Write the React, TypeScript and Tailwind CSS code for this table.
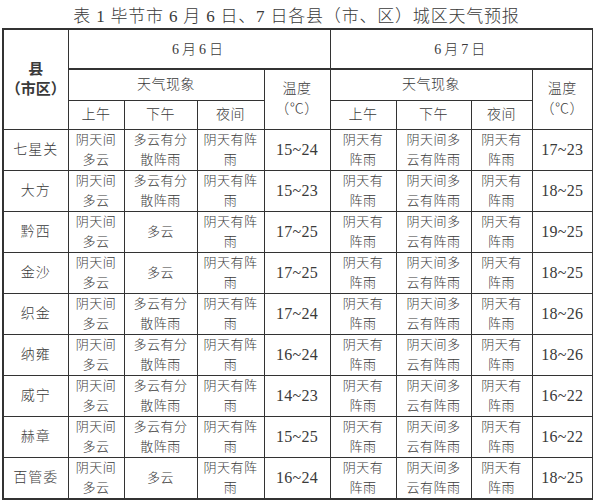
import React from "react";

type Row = {
  name: string;
  a: string[];
  t1: string;
  b: string[];
  t2: string;
};

const A1 = "阴天间\n多云";
const A2a = "多云有分\n散阵雨";
const A2b = "多云";
const A3 = "阴天有阵\n雨";
const B1 = "阴天有\n阵雨";
const B2 = "阴天间多\n云有阵雨";
const B3 = "阴天有\n阵雨";

const rows: Row[] = [
  { name: "七星关", a: [A1, A2a, A3], t1: "15~24", b: [B1, B2, B3], t2: "17~23" },
  { name: "大方", a: [A1, A2a, A3], t1: "15~23", b: [B1, B2, B3], t2: "18~25" },
  { name: "黔西", a: [A1, A2b, A3], t1: "17~25", b: [B1, B2, B3], t2: "19~25" },
  { name: "金沙", a: [A1, A2b, A3], t1: "17~25", b: [B1, B2, B3], t2: "18~25" },
  { name: "织金", a: [A1, A2a, A3], t1: "17~24", b: [B1, B2, B3], t2: "18~26" },
  { name: "纳雍", a: [A1, A2a, A3], t1: "16~24", b: [B1, B2, B3], t2: "18~26" },
  { name: "威宁", a: [A1, A2a, A3], t1: "14~23", b: [B1, B2, B3], t2: "16~22" },
  { name: "赫章", a: [A1, A2a, A3], t1: "15~25", b: [B1, B2, B3], t2: "16~22" },
  { name: "百管委", a: [A1, A2b, A3], t1: "16~24", b: [B1, B2, B3], t2: "18~25" },
];

function Lines({ text }: { text: string }) {
  const parts = text.split("\n");
  return (
    <div className="flex flex-col items-center leading-[20px]">
      {parts.map((p, i) => (
        <span key={i}>{p}</span>
      ))}
    </div>
  );
}

const cell = "border border-[#333] text-center align-middle p-0";
const wx = "text-[13px] tracking-[0.5px] font-light";
const temp = "text-[16px] tracking-[0.3px]";

export default function App() {
  return (
    <div
      className="w-[593px] h-[500px] bg-white text-[#3a3a3a] overflow-hidden"
      style={{ fontFamily: '"Liberation Serif", "Noto Sans CJK SC", serif' }}
    >
      <div className="h-[28px] flex items-center justify-center text-[17px] tracking-[0.8px] font-light pt-[6px]">
        表 1 毕节市 6 月 6 日、7 日各县（市、区）城区天气预报
      </div>
      <table className="ml-[2px] w-[590px] table-fixed border-collapse border-2 border-[#333]">
        <colgroup>
          <col className="w-[65px]" />
          <col className="w-[56px]" />
          <col className="w-[73px]" />
          <col className="w-[67px]" />
          <col className="w-[66px]" />
          <col className="w-[66px]" />
          <col className="w-[75px]" />
          <col className="w-[61px]" />
          <col className="w-[61px]" />
        </colgroup>
        <thead>
          <tr className="h-[40px]">
            <th rowSpan={3} className={`${cell} font-bold text-[15px] leading-[20px]`}>
              <div className="flex flex-col items-center">
                <span>县</span>
                <span>（市区）</span>
              </div>
            </th>
            <th colSpan={4} className={`${cell} font-light text-[14px] tracking-[3px] border-b-2`}>
              6月6日
            </th>
            <th colSpan={4} className={`${cell} font-light text-[14px] tracking-[3px] border-b-2`}>
              6月7日
            </th>
          </tr>
          <tr className="h-[31px]">
            <th colSpan={3} className={`${cell} font-light text-[14px] tracking-[0.5px]`}>
              天气现象
            </th>
            <th rowSpan={2} className={`${cell} font-light text-[14px] tracking-[0.5px]`}>
              <Lines text={"温度\n（℃）"} />
            </th>
            <th colSpan={3} className={`${cell} font-light text-[14px] tracking-[0.5px]`}>
              天气现象
            </th>
            <th rowSpan={2} className={`${cell} font-light text-[14px] tracking-[0.5px]`}>
              <Lines text={"温度\n（℃）"} />
            </th>
          </tr>
          <tr className="h-[29px]">
            {["上午", "下午", "夜间", "上午", "下午", "夜间"].map((t, i) => (
              <th key={i} className={`${cell} font-light text-[14px] tracking-[0.5px]`}>
                {t}
              </th>
            ))}
          </tr>
        </thead>
        <tbody>
          {rows.map((r) => (
            <tr key={r.name} className="h-[41px]">
              <td className={`${cell} text-[14px] tracking-[1px] font-light`}>{r.name}</td>
              {r.a.map((t, i) => (
                <td key={"a" + i} className={`${cell} ${wx}`}>
                  <Lines text={t} />
                </td>
              ))}
              <td className={`${cell} ${temp}`}>{r.t1}</td>
              {r.b.map((t, i) => (
                <td key={"b" + i} className={`${cell} ${wx}`}>
                  <Lines text={t} />
                </td>
              ))}
              <td className={`${cell} ${temp}`}>{r.t2}</td>
            </tr>
          ))}
        </tbody>
      </table>
    </div>
  );
}
